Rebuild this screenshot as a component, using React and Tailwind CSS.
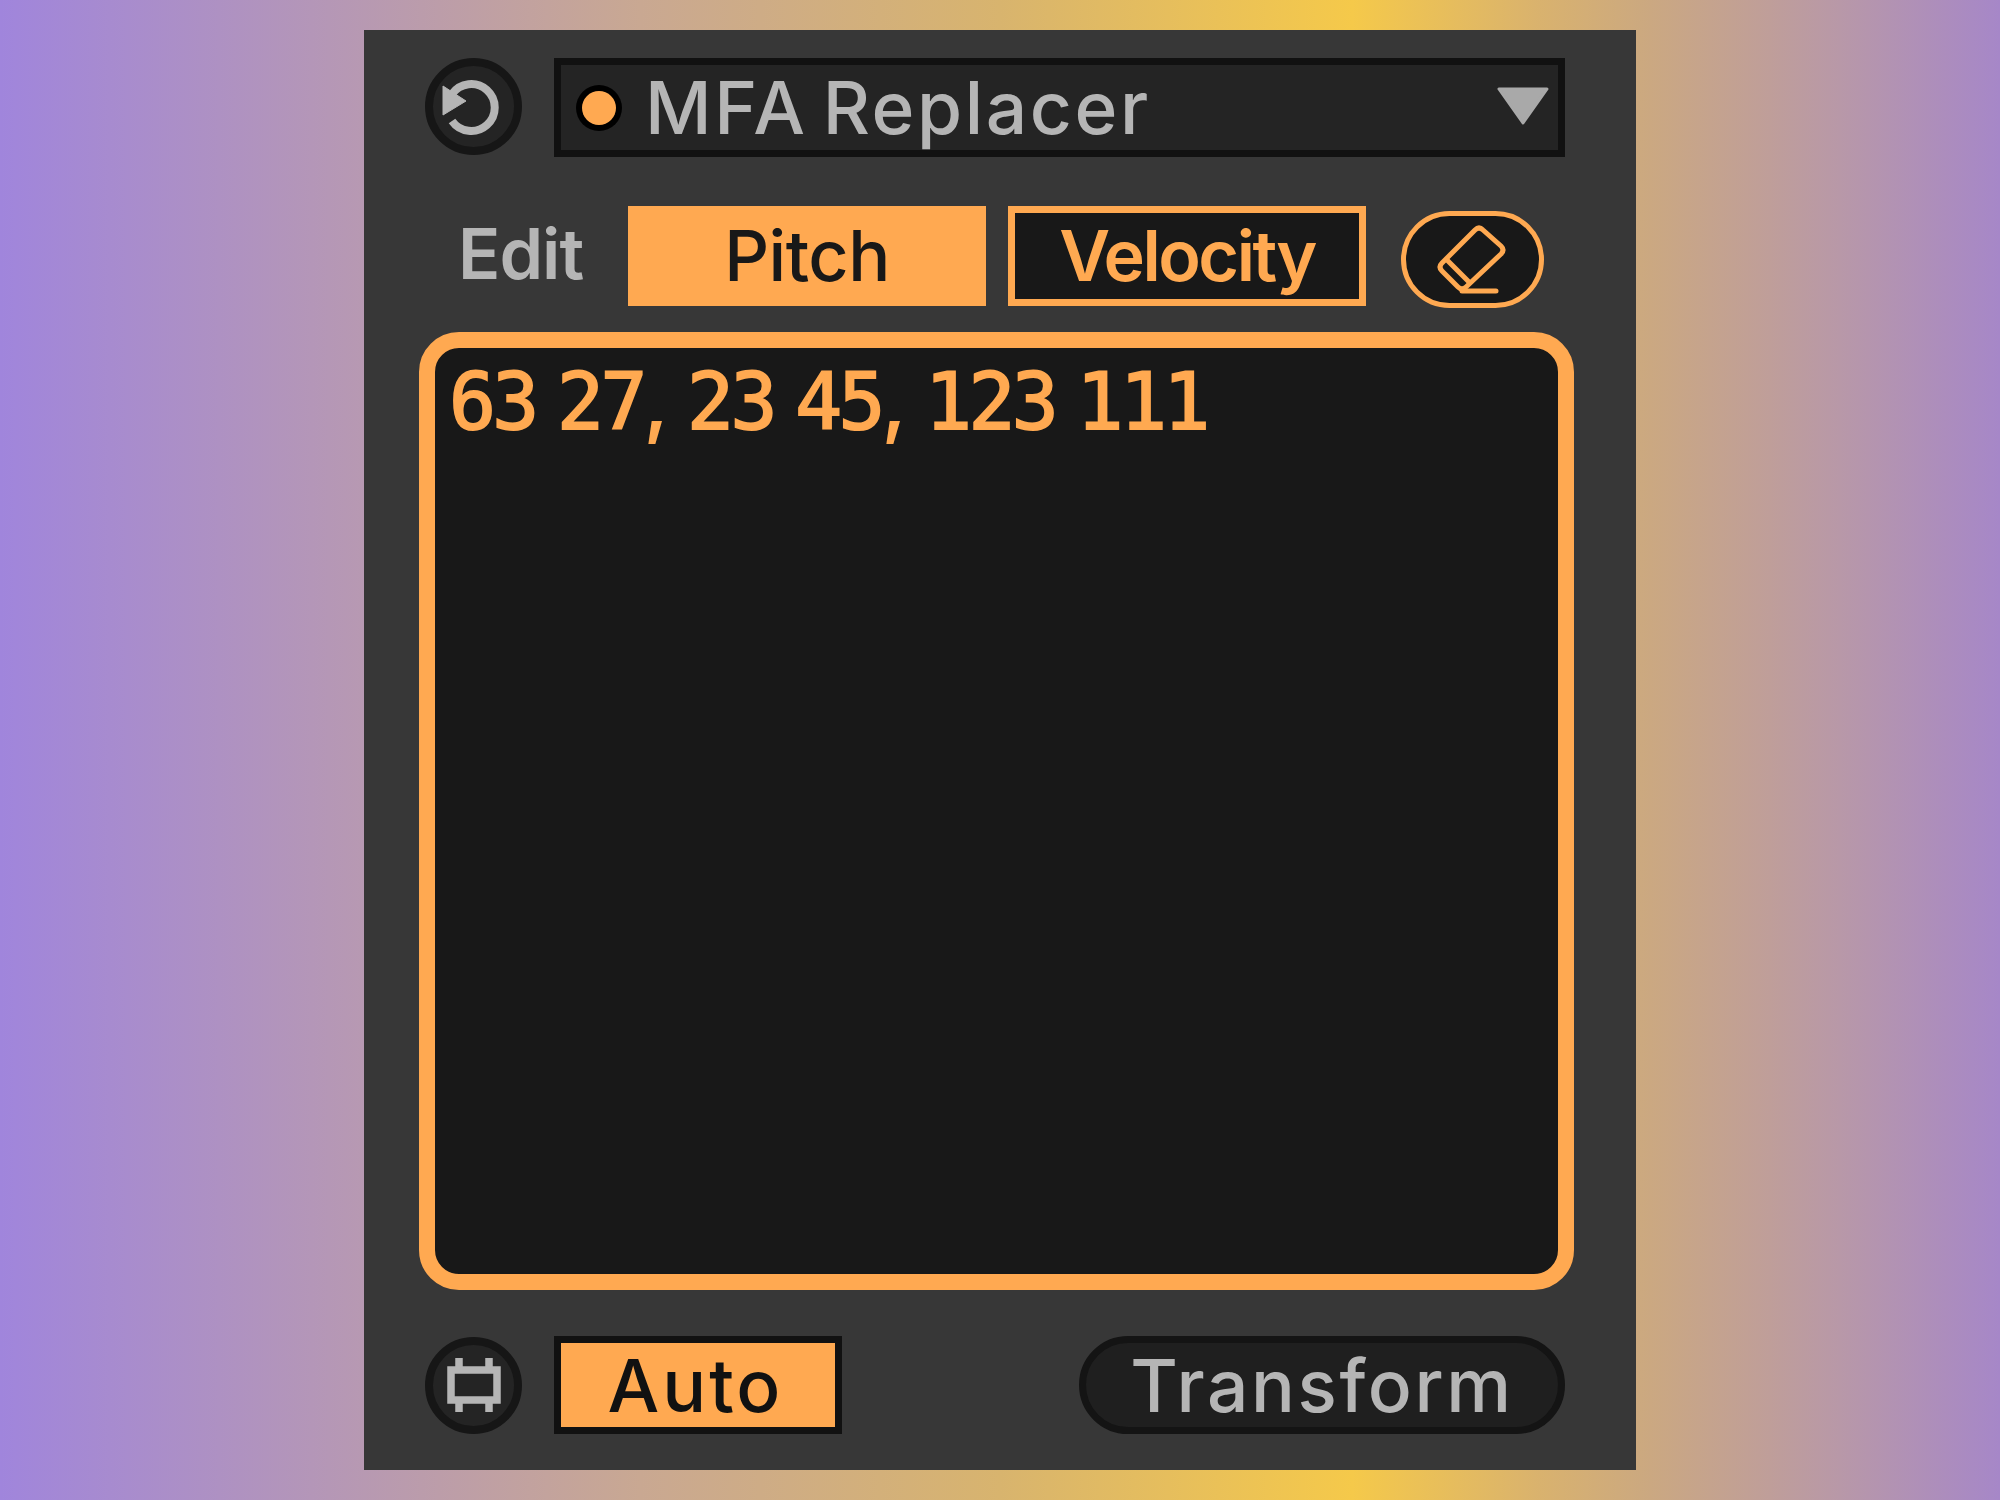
export default function App() {
  const comma = <span className="font-semibold -tracking-[3px] [-webkit-text-stroke:0px] font-[Inter]">,</span>;
  return (
    <div
      className="w-[2000px] h-[1500px] pt-[30px] pl-[364px] overflow-hidden bg-[linear-gradient(90deg,#a085dc_0%,#c9a892_32%,#d8b46e_50%,#f5c94a_67.6%,#d9b26e_77%,#cca97f_82%,#b898a8_92%,#a687c8_100%)]"
      style={{ fontFamily: "Inter, 'Liberation Sans', sans-serif" }}
    >
      <div className="w-[1272px] h-[1440px] bg-[#373737] flex flex-col pt-[28px] pl-[55px] pr-[62px]">
        {/* header row */}
        <div className="flex items-start ml-[6px] pr-[9px] gap-[32px] h-[99px]">
          <div className="w-[97px] h-[97px] box-border rounded-full bg-[#242424] border-[8px] border-[#161616] flex items-center justify-center shrink-0">
            <svg width="81" height="81" viewBox="8 8 81 81" fill="none">
              <path d="M27 63 A23.5 23.5 0 1 0 27 36" stroke="#b5b5b5" strokeWidth="8" />
              <path d="M18 28 L41 43 L18 57 Z" fill="#b5b5b5" strokeLinejoin="round" stroke="#b5b5b5" strokeWidth="1" />
            </svg>
          </div>
          <div className="flex-1 h-[99px] box-border bg-[#242424] border-[7px] border-[#111111] flex items-center pl-[15px] pr-[9px]">
            <div className="w-[46px] h-[46px] rounded-full bg-black flex items-center justify-center shrink-0">
              <div className="w-[34px] h-[34px] rounded-full bg-[#ffa951]" />
            </div>
            <span className="ml-[23px] text-[73px] leading-none font-medium text-[#b5b5b5] tracking-[2.6px] [word-spacing:-7px]">MFA Replacer</span>
            <svg className="ml-auto -mt-[4px]" width="52" height="38" viewBox="0 0 52 38">
              <path d="M2 2 H50 L26 36 Z" fill="#a9a9a9" stroke="#a9a9a9" strokeWidth="3" strokeLinejoin="round" />
            </svg>
          </div>
        </div>
        {/* edit row */}
        <div className="flex items-start mt-[49px] ml-[43px] h-[102px]">
          <span className="w-[166px] shrink-0 text-[70px] leading-[96px] font-semibold text-[#b5b5b5] -tracking-[1px] -ml-[4px]">Edit</span>
          <div className="ml-[4px] w-[358px] h-[100px] bg-[#ffa951] flex items-center justify-center text-[70px] leading-none font-medium text-[#181818] -tracking-[0.5px]">Pitch</div>
          <div className="ml-[22px] w-[358px] h-[100px] box-border bg-[#181818] border-[7px] border-[#ffa951] flex items-center justify-center text-[70px] leading-none text-[#ffa951] -tracking-[2.5px] font-semibold">Velocity</div>
          <div className="ml-[35px] mt-[5px] w-[143px] h-[97px] box-border rounded-full bg-[#181818] border-[5px] border-[#ffa951] flex items-center justify-center">
            <svg width="133" height="87" viewBox="5 5 133 87" fill="none" stroke="#ffa951" strokeWidth="5" strokeLinejoin="round" strokeLinecap="round">
              <path d="M74 19 Q78 15 82 19 L100 35 Q104 39 100 43 L65 76 Q61 80 57 76 L41 60 Q37 56 41 52 Z" />
              <path d="M47 50 L68 71" />
              <path d="M61 80 H95" />
            </svg>
          </div>
        </div>
        {/* text area */}
        <div
          className="mt-[24px] h-[958px] box-border rounded-[40px] bg-[#181818] border-[16px] border-[#ffa951] pl-[14px] pt-[5px] text-[78px] leading-[96px] font-normal -tracking-[3.6px] [word-spacing:-22px] [-webkit-text-stroke:2px_#ffa951] text-[#ffa951]"
          style={{ fontFamily: "'DejaVu Sans Mono', monospace" }}
        >
          63 27{comma} 23 45{comma} 123 111
        </div>
        {/* bottom row */}
        <div className="flex items-center justify-start ml-[6px] pr-[9px] mt-[46px] h-[98px]">
          <div className="w-[97px] h-[97px] box-border rounded-full bg-[#242424] border-[8px] border-[#161616] flex items-center justify-center shrink-0">
            <svg width="81" height="81" viewBox="8 8 81 81" fill="none" stroke="#b5b5b5">
              <rect x="26" y="33" width="46" height="30" strokeWidth="7.5" />
              <path d="M34 21 V33 M64 21 V33 M34 63 V75 M64 63 V75" strokeWidth="7.5" />
            </svg>
          </div>
          <div className="ml-[32px] w-[288px] h-[98px] box-border bg-[#ffa951] border-[7px] border-[#111111] flex items-center justify-center text-[73px] leading-none font-medium tracking-[3px] pr-[5px] text-[#111111]">Auto</div>
          <div className="ml-auto w-[486px] h-[98px] box-border rounded-full bg-[#1f1f1f] border-[7px] border-[#141414] flex items-center justify-center text-[73px] leading-none font-medium tracking-[2.6px] text-[#b5b5b5]">Transform</div>
        </div>
      </div>
    </div>
  );
}
